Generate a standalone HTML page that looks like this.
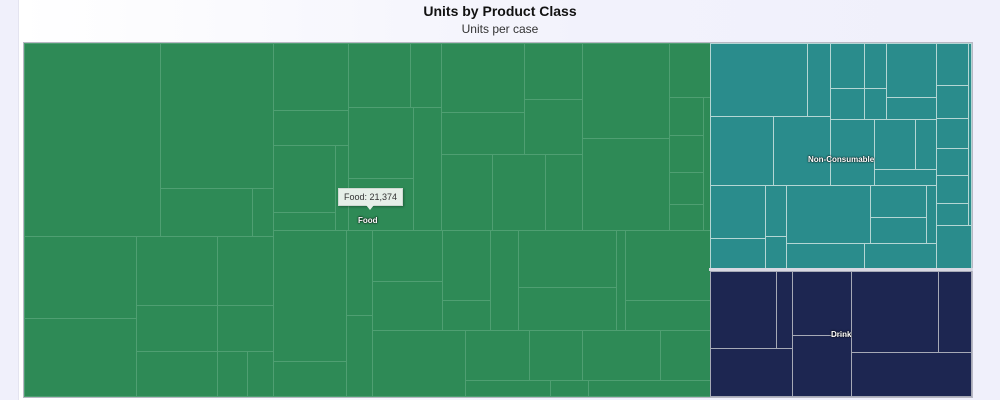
<!DOCTYPE html>
<html><head><meta charset="utf-8">
<style>
html,body{margin:0;padding:0;width:1000px;height:400px;overflow:hidden;background:#f0f0fb;font-family:"Liberation Sans",Arial,sans-serif;}
#panel{position:absolute;left:18px;top:0;width:956px;height:400px;background:linear-gradient(90deg,#ffffff,#f2f2fc 60%,#f0f0fb);border-left:1px solid #e4e4f0;}
h1{position:absolute;left:0;width:1000px;top:3px;margin:0;text-align:center;font-size:14px;font-weight:bold;color:#111;}
.sub{position:absolute;left:0;width:1000px;top:22px;text-align:center;font-size:12px;color:#333;}
#chart{position:absolute;left:23px;top:42px;width:949px;height:355px;border:1px solid #b8b8c0;box-sizing:border-box;}
.r{position:absolute;box-sizing:border-box;}
.f{background:#2e8a56;border:1px solid #4f9f72;}
.t{background:#2a8c8c;border:1px solid #b4d6d4;}
.d{background:#1d2651;border:1px solid #a6a9b6;}
.lbl{position:absolute;color:#fff;font-size:8px;font-weight:bold;text-shadow:0 0 2px #000,0 0 1px #000;white-space:nowrap;}
.tip{position:absolute;left:338px;top:188px;background:#e6efe8;border:1px solid #cfd8d2;font-size:9px;color:#333;padding:3px 5px;box-shadow:1px 1px 2px rgba(0,0,0,.3);}
.tip b{font-weight:normal;}
.tip:after{content:"";position:absolute;left:27px;bottom:-5px;border-left:4px solid transparent;border-right:4px solid transparent;border-top:5px solid #e6efe8;}
</style></head><body>
<div id="panel"></div>
<h1>Units by Product Class</h1>
<div class="sub">Units per case</div>
<div id="c"></div>
<div class="tip">Food: 21,374</div>
<div class="lbl" style="left:358px;top:216px">Food</div>
<div class="lbl" style="left:808px;top:155px">Non-Consumable</div>
<div class="lbl" style="left:831px;top:330px">Drink</div>
<script>
var F=[[24,43,160,236],[160,43,273,188],[160,188,252,236],[252,188,273,236],
[24,236,136,318],[24,318,136,396],[136,236,217,305],[136,305,217,351],[136,351,217,396],[217,236,273,305],[217,305,273,351],[217,351,247,396],[247,351,273,396],
[273,43,348,110],[273,110,348,145],[273,145,335,212],[273,212,335,230],[335,145,348,230],[348,43,410,107],[410,43,441,107],[348,107,413,178],[413,107,441,230],[348,178,413,230],
[441,43,524,112],[524,43,582,99],[441,112,524,154],[524,99,582,154],[441,154,492,230],[492,154,545,230],[545,154,582,230],
[582,43,669,138],[582,138,669,230],[669,43,710,97],[669,97,703,135],[669,135,703,172],[669,172,703,204],[669,204,703,230],[703,97,710,230],
[273,230,346,361],[273,361,346,396],[346,230,372,315],[346,315,372,396],[372,230,442,281],[372,281,442,330],[442,230,490,300],[442,300,490,330],[490,230,518,330],
[518,230,616,287],[518,287,616,330],[616,230,625,330],[625,230,710,300],[625,300,710,330],
[372,330,465,396],[465,330,529,380],[529,330,582,380],[582,330,660,380],[660,330,710,380],[465,380,550,396],[550,380,588,396],[588,380,710,396]];
var T=[[710,43,807,116],[807,43,830,116],[710,116,773,185],[773,116,830,185],[830,43,864,88],[864,43,886,88],[830,88,864,119],[864,88,886,119],[886,43,936,97],[886,97,936,119],
[830,119,874,185],[874,119,915,169],[915,119,936,169],[874,169,936,185],
[936,43,968,85],[936,85,968,118],[936,118,968,148],[936,148,968,175],[936,175,968,203],[936,203,968,225],[936,225,971,270],[968,43,971,225],
[710,185,765,238],[710,238,765,270],[765,185,786,236],[765,236,786,270],[786,185,870,243],[870,185,926,217],[870,217,926,243],[926,185,936,243],[786,243,864,270],[864,243,936,270]];
var D=[[710,271,776,348],[776,271,792,348],[710,348,792,396],[792,271,851,335],[792,335,851,396],[851,271,938,352],[938,271,971,352],[851,352,971,396]];
var h='';function add(a,c){a.forEach(function(r){h+='<div class="r '+c+'" style="left:'+r[0]+'px;top:'+r[1]+'px;width:'+(r[2]-r[0]+1)+'px;height:'+(r[3]-r[1]+1)+'px"></div>';});}
add(F,'f');add(T,'t');add(D,'d');
document.getElementById('c').innerHTML=h+'<div class="r" style="left:23px;top:42px;width:950px;height:356px;border:1px solid #b8b8c4"></div><div class="r" style="left:709px;top:268px;width:264px;height:3px;background:#d8d8e2"></div>';
</script>
</body></html>
